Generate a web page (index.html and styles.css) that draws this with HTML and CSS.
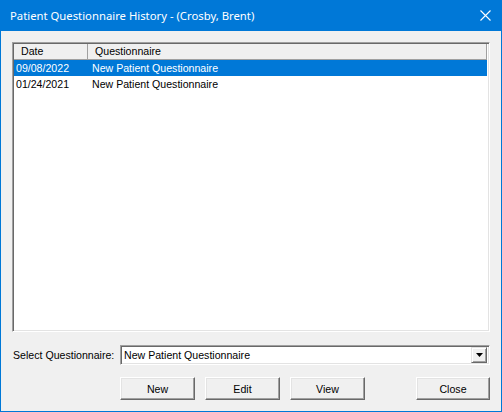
FILE: index.html
```html
<!DOCTYPE html>
<html lang="en">
<head>
    <meta charset="UTF-8">
    <title>Patient Questionnaire History</title>
    <link rel="stylesheet" href="styles.css">
</head>
<body>
    <div class="window">
        <!-- title bar -->
        <div class="title-bar">
            <span class="title">Patient Questionnaire History - (Crosby, Brent)</span>
            <svg class="close-x" width="11" height="11" viewBox="0 0 11 11">
                <path d="M0.5 0.5 L10.5 10.5 M10.5 0.5 L0.5 10.5" stroke="#fff" stroke-width="1.1"/>
            </svg>
        </div>

        <div class="content">
            <!-- history list -->
            <div class="list-box">
                <div class="list-header">
                    <div class="col-date head-cell">Date</div>
                    <div class="col-name head-cell">Questionnaire</div>
                </div>
                <div class="list-row selected">
                    <div class="col-date">09/08/2022</div>
                    <div class="col-name">New Patient Questionnaire</div>
                </div>
                <div class="list-row">
                    <div class="col-date">01/24/2021</div>
                    <div class="col-name">New Patient Questionnaire</div>
                </div>
            </div>

            <!-- select row -->
            <div class="select-row">
                <label class="select-label">Select Questionnaire:</label>
                <div class="combo">
                    <span class="combo-text">New Patient Questionnaire</span>
                    <span class="combo-btn">
                        <svg width="7" height="4" viewBox="0 0 7 4"><path d="M0 0 H7 L3.5 4 Z" fill="#000"/></svg>
                    </span>
                </div>
            </div>

            <!-- buttons -->
            <div class="button-row">
                <button class="btn">New</button>
                <button class="btn">Edit</button>
                <button class="btn">View</button>
                <button class="btn btn-close">Close</button>
            </div>
        </div>
    </div>
</body>
</html>
```

FILE: styles.css
```css
* {
    box-sizing: border-box;
}

body {
    margin: 0;
    background: #f0f0f0;
    font-family: 'Liberation Sans', Arial, sans-serif;
    font-size: 10.6px;
    color: #000;
}

.window {
    width: 502px;
    height: 412px;
    border: 1px solid #0078d7;
    border-top: none;
    background: #f0f0f0;
    display: flex;
    flex-direction: column;
}

/* title bar */
.title-bar {
    height: 31px;
    background: #0078d7;
    color: #fff;
    display: flex;
    align-items: center;
    padding: 0 0 1px 9px;
}

.title {
    font-family: 'Noto Sans', 'Open Sans', sans-serif;
    font-size: 11.3px;
    flex: 1;
}

.close-x {
    margin-right: 10px;
}

.content {
    flex: 1;
    display: flex;
    flex-direction: column;
    padding: 11px;
}

/* list */
.list-box {
    height: 290px;
    background: #fff;
    border: 1px solid;
    border-color: #a0a0a0 #fff #fff #a0a0a0;
    box-shadow: inset 1px 1px #696969, inset -1px -1px #e3e3e3;
    padding: 1px 2px 1px 1px;
}

.list-header {
    display: flex;
    height: 16px;
    background: #f0f0f0;
    border-bottom: 1px solid #a0a0a0;
    border-right: 1px solid #a0a0a0;
}

.head-cell {
    line-height: 15px;
}

.list-header .col-date {
    width: 74px;
    padding-left: 7px;
    border-right: 1px solid #a0a0a0;
}

.list-header .col-name {
    padding-left: 7px;
}

.list-row {
    display: flex;
    height: 16px;
    line-height: 16px;
}

.list-row.selected {
    background: #0078d7;
    color: #fff;
}

.col-date {
    width: 78px;
    padding-left: 2px;
    flex-shrink: 0;
}

.col-name {
    flex: 1;
}

/* select row */
.select-row {
    display: flex;
    align-items: center;
    margin-top: 13px;
    height: 20px;
}

.select-label {
    width: 108px;
    padding-left: 1px;
}

.combo {
    flex: 1;
    height: 20px;
    background: #fff;
    border: 1px solid;
    border-color: #a0a0a0 #fff #fff #a0a0a0;
    box-shadow: inset 1px 1px #696969, inset -1px -1px #e3e3e3;
    display: flex;
    align-items: center;
    padding: 2px 2px 2px 3px;
}

.combo-text {
    flex: 1;
}

.combo-btn {
    width: 16px;
    height: 16px;
    background: #f0f0f0;
    border: 1px solid;
    border-color: #e3e3e3 #696969 #696969 #e3e3e3;
    box-shadow: inset 1px 1px #fff, inset -1px -1px #a0a0a0;
    display: flex;
    align-items: center;
    justify-content: center;
}

/* buttons */
.button-row {
    display: flex;
    margin-top: 12px;
    padding-left: 108px;
    gap: 10px;
}

.btn {
    width: 75px;
    height: 23px;
    font-family: 'Liberation Sans', Arial, sans-serif;
    font-size: 10.6px;
    color: #000;
    background: #f0f0f0;
    border: 1px solid;
    border-color: #fff #696969 #696969 #fff;
    box-shadow: inset -1px -1px #a0a0a0, inset 1px 1px #e3e3e3;
    padding: 0;
}

.btn-close {
    margin-left: auto;
    width: 74px;
}
```
